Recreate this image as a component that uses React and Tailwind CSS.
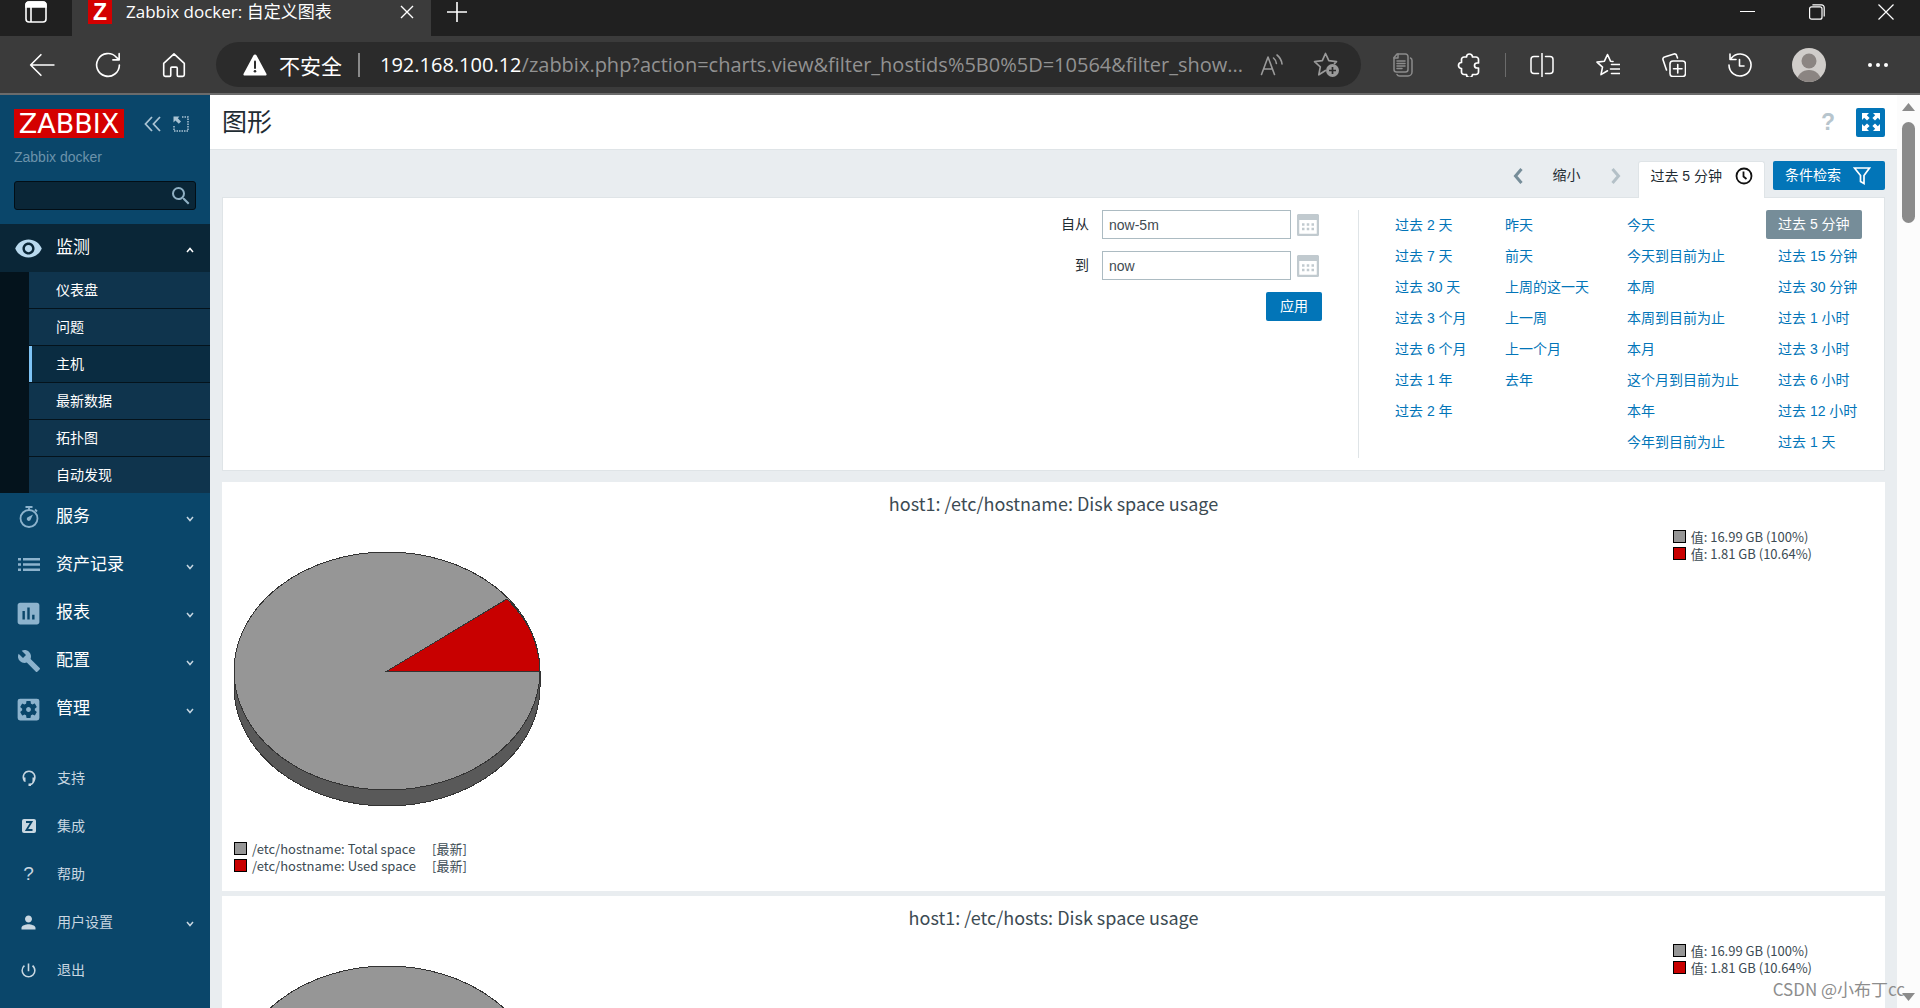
import React from "react";
import {
  MdVisibility,
  MdAssessment,
  MdBuild,
  MdSettingsApplications,
  MdPerson,
  MdPowerSettingsNew,
  MdSearch,
} from "react-icons/md";

/* ---------- shared drawing helpers ---------- */

function Line({ size = 24, children, width = 2, className = "" }) {
  return (
    <svg
      width={size}
      height={size}
      viewBox="0 0 24 24"
      fill="none"
      stroke="currentColor"
      strokeWidth={width}
      strokeLinecap="round"
      strokeLinejoin="round"
      className={className}
      aria-hidden="true"
    >
      {children}
    </svg>
  );
}

/* ---------- browser chrome ---------- */

function TabStrip() {
  return (
    <div className="flex h-9 bg-[#202020] text-white">
      <button type="button" aria-label="标签操作" className="flex w-[72px] items-center justify-center pb-3">
        <svg width="24" height="24" viewBox="0 0 24 24" fill="none" stroke="currentColor" strokeWidth="1.6" aria-hidden="true">
          <rect x="2" y="2" width="20" height="20" rx="3" />
          <path d="M2 7V5a3 3 0 0 1 3-3h14a3 3 0 0 1 3 3v2z" fill="currentColor" />
          <path d="M7 7v15" />
        </svg>
      </button>
      <div className="flex w-[359px] items-center bg-[#3b3b3b] pb-3 pl-4">
        <span className="flex size-6 items-center justify-center bg-[#d40000] font-['Liberation_Sans',sans-serif] text-[23px] font-bold leading-6">
          Z
        </span>
        <span className="ml-[14px] flex-1 whitespace-nowrap font-['Open_Sans','Noto_Sans_CJK_SC',sans-serif] text-[17px] leading-6">
          Zabbix docker: 自定义图表
        </span>
        <button type="button" aria-label="关闭标签页" className="mr-[17px]">
          <svg width="14" height="14" viewBox="0 0 14 14" stroke="currentColor" strokeWidth="1.4" aria-hidden="true">
            <path d="M1 1l12 12M13 1L1 13" />
          </svg>
        </button>
      </div>
      <button type="button" aria-label="新建标签页" className="flex w-[52px] items-center justify-center pb-3">
        <svg width="22" height="22" viewBox="0 0 22 22" stroke="currentColor" strokeWidth="1.6" aria-hidden="true">
          <path d="M11 1v20M1 11h20" />
        </svg>
      </button>
      <div className="ml-auto flex pb-3">
        <button type="button" aria-label="最小化" className="flex w-[69px] items-center justify-center">
          <svg width="16" height="16" viewBox="0 0 16 16" stroke="currentColor" strokeWidth="1" aria-hidden="true">
            <path d="M0 7.5h15" />
          </svg>
        </button>
        <button type="button" aria-label="还原" className="flex w-[69px] items-center justify-center">
          <svg width="16" height="16" viewBox="0 0 16 16" fill="none" stroke="currentColor" strokeWidth="1.2" aria-hidden="true">
            <rect x="0.6" y="2.8" width="12.4" height="12.4" rx="2" />
            <path d="M3.4 0.8h9.200a2.600 2.600 0 0 1 2.600 2.600v9" />
          </svg>
        </button>
        <button type="button" aria-label="关闭" className="flex w-[69px] items-center justify-center">
          <svg width="16" height="16" viewBox="0 0 16 16" stroke="currentColor" strokeWidth="1.2" aria-hidden="true">
            <path d="M0.500 0.500l15 15M15.500 0.500l-15 15" />
          </svg>
        </button>
      </div>
    </div>
  );
}

function ToolButton({ label, className = "w-[66px]", children }) {
  return (
    <button type="button" aria-label={label} className={`flex items-center justify-center ${className}`}>
      {children}
    </button>
  );
}

function AddressBar() {
  return (
    <div className="ml-[9px] mr-[9px] flex h-[45px] min-w-0 flex-1 items-center rounded-full bg-[#2b2b2b] pl-[27px] pr-2">
      <svg width="24" height="24" viewBox="0 0 24 24" className="shrink-0" aria-hidden="true">
        <path d="M12 1.500c.7 0 1.300.4 1.600 1l9.800 18.300c.5 1-.1 1.700-1 1.700H1.600c-.9 0-1.500-.7-1-1.700L10.400 2.500c.3-.6.900-1 1.600-1z" fill="#fff" />
        <path d="M12 8.500v6.500" stroke="#2b2b2b" strokeWidth="2" strokeLinecap="round" />
        <circle cx="12" cy="18.200" r="1.300" fill="#2b2b2b" />
      </svg>
      <span className="ml-3 shrink-0 font-['Noto_Sans_CJK_SC',sans-serif] text-[21px] leading-6 text-white">不安全</span>
      <span className="ml-4 h-6 w-0.5 shrink-0 bg-[#8a8a8a]" />
      <div
        role="textbox"
        aria-label="地址栏"
        className="ml-5 min-w-0 flex-1 overflow-hidden whitespace-nowrap font-['Open_Sans',sans-serif] text-[20px] leading-7 text-[#929292]"
      >
        <span className="text-white">192.168.100.12</span>
        /zabbix.php?action=charts.view&amp;filter_hostids%5B0%5D=10564&amp;filter_show...
      </div>
      <ToolButton label="大声朗读" className="w-[54px] shrink-0 text-[#9a9a9a]">
        <Line width={1.6}>
          <path d="M1.500 21.500L8 4l6.500 17.500M4 16h8" />
          <path d="M13.500 5c1.700 1.400 2.700 3.200 2.900 5.500M17 2c2.900 2.200 4.500 5 5 9" />
        </Line>
      </ToolButton>
      <ToolButton label="收藏" className="w-[54px] shrink-0 text-[#9a9a9a]">
        <svg width="26" height="26" viewBox="0 0 26 26" fill="none" aria-hidden="true">
          <path d="M12.500 18.500l-6.700 4.300 1.500-8L1.500 9.700l7.800-1L12.500 1.500l3.300 7.200 7.700 1-2 1.800" stroke="currentColor" strokeWidth="1.700" strokeLinejoin="round" strokeLinecap="round" />
          <circle cx="19.500" cy="18.500" r="6.500" fill="currentColor" />
          <path d="M19.500 15v7M16 18.500h7" stroke="#2b2b2b" strokeWidth="1.700" />
        </svg>
      </ToolButton>
    </div>
  );
}

function Toolbar() {
  return (
    <div className="flex h-[59px] items-stretch border-b-2 border-[#6b6b6b] bg-[#3b3b3b] px-[9px] text-white">
      <ToolButton label="返回">
        <Line size={26} width={1.5}>
          <path d="M23 12H1.500M11 2.500L1.500 12l9.500 9.500" />
        </Line>
      </ToolButton>
      <ToolButton label="刷新">
        <Line size={26} width={1.5}>
          <path d="M22.500 12a10.500 10.500 0 1 1-2.900-7.300L22 7M22.300 1.500V7.300H16.500" />
        </Line>
      </ToolButton>
      <ToolButton label="主页">
        <Line size={26} width={1.5}>
          <path d="M2.500 10.500L12 1.800l9.500 8.700V21a1.500 1.500 0 0 1-1.500 1.500h-4a1 1 0 0 1-1-1V15a1 1 0 0 0-1-1h-4a1 1 0 0 0-1 1v6.500a1 1 0 0 1-1 1H4A1.500 1.500 0 0 1 2.500 21z" />
        </Line>
      </ToolButton>
      <div className="flex min-w-0 flex-1 items-center">
        <AddressBar />
      </div>
      <ToolButton label="阅读器" className="w-[66px] text-[#8c8c8c]">
        <Line width={1.5}>
          <path d="M6 1h8.500A2.500 2.500 0 0 1 17 3.500v13a2.500 2.500 0 0 1-2.500 2.500h-9A2.500 2.500 0 0 1 3 16.500V4.500z" />
          <path d="M7 1v4H3M6 8h8M6 10.500h8M6 13h8M6 15.500h5" />
          <path d="M19.500 5c1 .4 1.500 1.300 1.500 2.500V19a4 4 0 0 1-4 4H8.500c-1.200 0-2-.5-2.500-1.500" />
        </Line>
      </ToolButton>
      <ToolButton label="扩展">
        <Line width={1.7}>
          <path d="M9.500 4a3 3 0 0 1 6 0H19a2.500 2.500 0 0 1 2.500 2.500V10H20a2.500 2.500 0 0 0 0 5h1.500v4a2.500 2.500 0 0 1-2.500 2.500h-3.500a3 3 0 0 1-6 0H7A2.500 2.500 0 0 1 4.500 19v-3.500a3 3 0 0 1 0-6v-3A2.500 2.500 0 0 1 7 4z" />
        </Line>
      </ToolButton>
      <span className="flex w-[7px] items-center justify-center">
        <span className="h-6 w-px bg-[#6b6b6b]" />
      </span>
      <ToolButton label="分屏">
        <Line width={1.5}>
          <path d="M12 0.500v23M8.500 3.500H4A3 3 0 0 0 1 6.500v11a3 3 0 0 0 3 3h4.500M15.500 3.500H20a3 3 0 0 1 3 3v11a3 3 0 0 1-3 3h-4.500" />
        </Line>
      </ToolButton>
      <ToolButton label="收藏夹">
        <Line width={1.6}>
          <path d="M17 8.500l-2.500-.3L11.500 1.500 8.400 8.200l-7.400.9 5.500 5-1.500 7.500 6.500-3.800" />
          <path d="M15.500 11.500H23.500M14.500 16H23.500M15.500 20.500H23.500" />
        </Line>
      </ToolButton>
      <ToolButton label="集锦">
        <Line width={1.6}>
          <rect x="8" y="8" width="15.500" height="15.500" rx="3" />
          <path d="M15.750 11.500v8.500M11.500 15.750H20M15.500 5l-.8-2.300A2.200 2.200 0 0 0 12 1L2.500 4A2.200 2.200 0 0 0 1 6.800L4.500 17" />
        </Line>
      </ToolButton>
      <ToolButton label="历史记录">
        <Line width={1.6}>
          <path d="M1 12A11 11 0 1 0 3.500 5M2 1v5.500h6M11.500 6.500V13H16" />
        </Line>
      </ToolButton>
      <ToolButton label="个人资料" className="w-[72px]">
        <svg width="34" height="34" viewBox="0 0 34 34" aria-hidden="true">
          <clipPath id="avatar">
            <circle cx="17" cy="17" r="17" />
          </clipPath>
          <g clipPath="url(#avatar)">
            <rect width="34" height="34" fill="#d0cdca" />
            <circle cx="17" cy="13" r="7.500" fill="#8b8582" />
            <ellipse cx="17" cy="33" rx="12" ry="11" fill="#8b8582" />
          </g>
        </svg>
      </ToolButton>
      <ToolButton label="设置及其他">
        <svg width="20" height="4" viewBox="0 0 20 4" fill="currentColor" aria-hidden="true">
          <circle cx="2" cy="2" r="2" />
          <circle cx="10" cy="2" r="2" />
          <circle cx="18" cy="2" r="2" />
        </svg>
      </ToolButton>
    </div>
  );
}

/* ---------- sidebar ---------- */

function Chevron({ up }) {
  return (
    <svg width="8" height="6" viewBox="0 0 8 6" fill="none" stroke="currentColor" strokeWidth="1.500" className="mt-1" aria-hidden="true">
      <path d={up ? "M1 5l3-3.500L7 5" : "M1 1l3 3.500L7 1"} />
    </svg>
  );
}

function StopwatchIcon() {
  return (
    <svg width="22" height="22" viewBox="0 0 22 22" fill="none" aria-hidden="true">
      <circle cx="11" cy="12.500" r="8.500" stroke="currentColor" strokeWidth="1.800" />
      <path d="M7.500 1h7M11 1v3M17 3.500l2 2" stroke="currentColor" strokeWidth="1.800" />
      <path d="M15 8.500l-2.300 5a2 2 0 1 1-2.500-2.500z" fill="currentColor" />
    </svg>
  );
}

function ListIcon() {
  return (
    <svg width="22" height="22" viewBox="0 0 22 22" fill="currentColor" aria-hidden="true">
      <path d="M0 4h3v2.500H0zM5 4h17v2.500H5zM0 9.200h3v2.500H0zM5 9.200h17v2.500H5zM0 14.400h3v2.500H0zM5 14.400h17v2.500H5z" />
    </svg>
  );
}

function HeadsetIcon() {
  return (
    <svg width="16" height="16" viewBox="0 0 16 16" fill="none" aria-hidden="true">
      <path d="M3.500 11C.5 6 3.500 1.200 8 1.200S15.500 6 13 11c-.9 2-2 3.500-4 3.800" stroke="currentColor" strokeWidth="1.500" />
      <path d="M2 7.500h2.500V12H3.500zM11.500 7.500H14L12.500 12h-1zM7.500 13.500H10V16H7.500z" fill="currentColor" />
    </svg>
  );
}

const BIG = "size-[29px]";
const mainItems = [
  { label: "服务", icon: <StopwatchIcon /> },
  { label: "资产记录", icon: <ListIcon /> },
  { label: "报表", icon: <MdAssessment className={BIG} /> },
  { label: "配置", icon: <MdBuild className="size-6" /> },
  { label: "管理", icon: <MdSettingsApplications className={BIG} /> },
];

const subItems = ["仪表盘", "问题", "主机", "最新数据", "拓扑图", "自动发现"];

const footItems = [
  { label: "支持", icon: <HeadsetIcon /> },
  {
    label: "集成",
    icon: (
      <span className="flex size-[14px] items-center justify-center rounded-xs bg-current">
        <svg width="8" height="10" viewBox="0 0 8 10" fill="none" stroke="#0a466a" strokeWidth="1.800" aria-hidden="true">
          <path d="M1 1h5.500L1.500 9H7.500" />
        </svg>
      </span>
    ),
  },
  { label: "帮助", icon: <span className="text-[19px] leading-5">?</span> },
  { label: "用户设置", icon: <MdPerson className="size-[21px]" />, more: true },
  { label: "退出", icon: <MdPowerSettingsNew className="size-[19px]" /> },
];

function Sidebar() {
  return (
    <aside className="flex w-[210px] shrink-0 flex-col bg-[#0a466a]">
      <div className="flex items-center pl-[14px] pt-[14px]">
        <a
          href="#home"
          className="flex h-[29px] w-[110px] items-center justify-center bg-[#d40000] font-['DejaVu_Sans',sans-serif] text-[27px] leading-[29px] text-white"
        >
          ZABBIX
        </a>
        <button type="button" aria-label="收起侧边栏" className="ml-5 text-[#a9c3d3]">
          <svg width="17" height="16" viewBox="0 0 17 16" fill="none" stroke="currentColor" strokeWidth="1.800" aria-hidden="true">
            <path d="M8 1L1.500 8 8 15M16 1L9.500 8l6.500 7" />
          </svg>
        </button>
        <button type="button" aria-label="隐藏侧边栏" className="ml-3 text-[#a9c3d3]">
          <svg width="16" height="16" viewBox="0 0 16 16" aria-hidden="true">
            <path d="M9 1H15V15H1V9" fill="none" stroke="currentColor" strokeWidth="1.500" strokeDasharray="1.500 1" />
            <path d="M0.500 0.500h6L4.800 2.200l3.200 3.400-2.200 2.200-3.400-3.300L0.500 6.500z" fill="currentColor" />
          </svg>
        </button>
      </div>
      <div className="mt-[9px] px-[14px] text-[14px] leading-5 text-[#6c93ab]">Zabbix docker</div>
      <form className="mx-[14px] mt-[14px] flex h-[29px] items-center rounded-[3px] border border-[#020e16] bg-[#0a2637] pr-0.5">
        <input type="text" aria-label="搜索" className="min-w-0 flex-1 bg-transparent px-2 text-[14px] text-white outline-none" />
        <button type="button" aria-label="搜索" className="text-[#8fb0c4]">
          <MdSearch className="size-6" />
        </button>
      </form>
      <nav className="mt-[14px] flex flex-col text-[17px] text-white">
        <a href="#monitoring" className="flex h-12 items-center bg-[#0a2637] pr-4">
          <span className="flex w-[56px] justify-start pl-[14px] text-[#b9d9ee]">
            <MdVisibility className="size-[29px]" />
          </span>
          <span className="flex-1">监测</span>
          <Chevron up />
        </a>
        <ul className="border-l-[29px] border-[#04131c] text-[14px]">
          {subItems.map((label) => {
            const on = label === "主机";
            return (
              <li key={label} className="border-b border-[#04131c] last:border-b-0">
                <a
                  href="#sub"
                  className={
                    on
                      ? "flex h-9 items-center border-l-[3px] border-[#7fc4f5] bg-[#0a2c41] pl-6"
                      : "flex h-9 items-center bg-[#0f344d] pl-[27px]"
                  }
                >
                  {label}
                </a>
              </li>
            );
          })}
        </ul>
        {mainItems.map(({ label, icon }) => (
          <a href="#section" key={label} className="flex h-12 items-center pr-4">
            <span className="flex w-[56px] items-center pl-[14px] text-[#8db3cd]">
              <span className="flex w-[29px] justify-center">{icon}</span>
            </span>
            <span className="flex-1">{label}</span>
            <span className="text-[#c5d5e0]">
              <Chevron />
            </span>
          </a>
        ))}
      </nav>
      <nav className="mt-[21px] flex flex-col text-[14px] text-[#c9d7e1]">
        {footItems.map(({ label, icon, more }) => (
          <a href="#user" key={label} className="flex h-12 items-center pr-4">
            <span className="flex w-[57px] items-center pl-[14px]">
              <span className="flex w-[29px] justify-center">{icon}</span>
            </span>
            <span className="flex-1">{label}</span>
            {more && <Chevron />}
          </a>
        ))}
      </nav>
    </aside>
  );
}

/* ---------- time filter ---------- */

function CalendarIcon() {
  return (
    <svg width="22" height="22" viewBox="0 0 22 22" aria-hidden="true">
      <rect x="1" y="1" width="20" height="20" rx="1.500" fill="none" stroke="#c1cacf" strokeWidth="2.500" />
      <rect x="1" y="1" width="20" height="5" fill="#c1cacf" />
      <path d="M5 10.500h12M5 15h12" stroke="#c1cacf" strokeWidth="2.500" strokeDasharray="2.500 2.250" />
    </svg>
  );
}

function DateField({ id, label, value }) {
  return (
    <div className="flex items-center justify-end">
      <label htmlFor={id} className="mr-[13px] text-[14px]">
        {label}
      </label>
      <input
        id={id}
        type="text"
        defaultValue={value}
        className="h-[29px] w-[189px] border border-[#acbbc2] bg-white px-[6px] text-[14px] text-[#3f4b52] outline-none"
      />
      <button type="button" aria-label="日历" className="ml-[6px] mr-[3px]">
        <CalendarIcon />
      </button>
    </div>
  );
}

const ranges = [
  ["过去 2 天", "过去 7 天", "过去 30 天", "过去 3 个月", "过去 6 个月", "过去 1 年", "过去 2 年"],
  ["昨天", "前天", "上周的这一天", "上一周", "上一个月", "去年"],
  ["今天", "今天到目前为止", "本周", "本周到目前为止", "本月", "这个月到目前为止", "本年", "今年到目前为止"],
  ["过去 5 分钟", "过去 15 分钟", "过去 30 分钟", "过去 1 小时", "过去 3 小时", "过去 6 小时", "过去 12 小时", "过去 1 天"],
];

function TimeFilter() {
  return (
    <section className="pt-[11px]">
      <div className="flex items-start justify-end text-[14px]">
        <button type="button" aria-label="上一时段" className="flex h-[29px] w-9 items-center justify-center">
          <svg width="10" height="16" viewBox="0 0 10 16" fill="none" stroke="#768d99" strokeWidth="3" aria-hidden="true">
            <path d="M8.500 1L2.500 8l6 7" />
          </svg>
        </button>
        <button type="button" className="h-[29px] px-4">缩小</button>
        <button type="button" aria-label="下一时段" className="mr-0.5 flex h-[29px] w-10 items-center justify-center">
          <svg width="10" height="16" viewBox="0 0 10 16" fill="none" stroke="#b4c0c7" strokeWidth="3" aria-hidden="true">
            <path d="M1.500 1l6 7-6 7" />
          </svg>
        </button>
        <a
          href="#range"
          className="z-10 -mb-px flex h-[37px] items-center gap-[13px] rounded-t-[3px] border border-b-0 border-[#dfe4e7] bg-white px-[11px] pb-2"
        >
          过去 5 分钟
          <svg width="18" height="18" viewBox="0 0 18 18" fill="none" stroke="#111" strokeWidth="1.800" aria-hidden="true">
            <circle cx="9" cy="9" r="7.500" />
            <path d="M8.500 4.500v5l3 2.500" />
          </svg>
        </a>
        <a
          href="#filter"
          className="ml-2 flex h-[29px] items-center gap-3 rounded-[2px] bg-[#0275b8] pl-3 pr-[14px] text-white"
        >
          条件检索
          <svg width="18" height="18" viewBox="0 0 17 18" fill="none" stroke="currentColor" strokeWidth="1.700" aria-hidden="true">
            <path d="M1 1h15L10.500 8.500V16.500L7 14.500V8.500z" />
          </svg>
        </a>
      </div>
      <div className="flex justify-end border border-[#dfe4e7] bg-white py-3 pr-3">
        <div className="flex flex-col gap-3 pr-9">
          <DateField id="from" label="自从" value="now-5m" />
          <DateField id="to" label="到" value="now" />
          <button type="button" className="h-[29px] self-end rounded-[2px] bg-[#0275b8] px-[14px] text-[14px] text-white">
            应用
          </button>
        </div>
        <div className="grid grid-cols-[110px_122px_151px_106px] border-l border-[#dfe4e7] pl-6 text-[14px] text-[#0275b8]">
          {ranges.map((col, i) => (
            <ul key={i}>
              {col.map((t) => (
                <li key={t} className="flex h-[31px] items-start whitespace-nowrap">
                  <a
                    href="#t"
                    className={
                      t === "过去 5 分钟"
                        ? "h-[29px] rounded-[2px] bg-[#768d99] px-3 leading-[29px] text-white"
                        : "px-3 leading-[31px]"
                    }
                  >
                    {t}
                  </a>
                </li>
              ))}
            </ul>
          ))}
        </div>
      </div>
    </section>
  );
}

/* ---------- charts ---------- */

function Pie() {
  return (
    <svg width="308" height="256" viewBox="0 0 308 256" shapeRendering="crispEdges" stroke="#333" strokeWidth="1" role="img" aria-label="Disk space usage">
      <path d="M1 120v16a153 119 0 0 0 306 0v-16z" fill="#595959" />
      <ellipse cx="154" cy="120" rx="153" ry="119" fill="#969696" />
      <path d="M154 120L274 48A153 119 0 0 1 307 120z" fill="#c80000" />
    </svg>
  );
}

function Swatch({ red }) {
  return <span className={`size-[13px] border border-black ${red ? "bg-[#c80000]" : "bg-[#969696]"}`} />;
}

function Chart({ path, items = [] }) {
  return (
    <article className="h-[409px] bg-white px-3 font-['Noto_Sans_CJK_SC',sans-serif] text-[13px] leading-[17px] text-[#3c4b53]">
      <h2 className="pt-[9px] text-center text-[18px] leading-6">host1: {path}: Disk space usage</h2>
      <div className="flex items-start justify-between pt-[13px]">
        <div className="-ml-px pt-[23px]">
          <Pie />
        </div>
        <ul className="mr-[61px]">
          <li className="flex items-center gap-[5px]">
            <Swatch /> 值: 16.99 GB (100%)
          </li>
          <li className="flex items-center gap-[5px]">
            <Swatch red /> 值: 1.81 GB (10.64%)
          </li>
        </ul>
      </div>
      <table className="mt-[33px]">
        <tbody>
          {items.map((name, i) => (
            <tr key={name}>
              <td className="w-[18px] p-0">
                <span className="flex">
                  <Swatch red={i === 1} />
                </span>
              </td>
              <td className="w-[180px] p-0">
                {path}: {name}
              </td>
              <td className="p-0">[最新]</td>
            </tr>
          ))}
        </tbody>
      </table>
    </article>
  );
}

/* ---------- page ---------- */

function Scrollbar() {
  return (
    <div className="flex w-[23px] shrink-0 flex-col items-center bg-[#fcfcfc] pt-2 pb-[7px]" aria-hidden="true">
      <svg width="13" height="8" viewBox="0 0 13 8" fill="#8b8b8b">
        <path d="M6.500 0L13 8H0z" />
      </svg>
      <span className="mt-[11px] h-[101px] w-[13px] rounded-full bg-[#8b8b8b]" />
      <svg width="13" height="8" viewBox="0 0 13 8" fill="#8b8b8b" className="mt-auto">
        <path d="M6.500 8L0 0h13z" />
      </svg>
    </div>
  );
}

export default function App() {
  return (
    <div className="relative flex h-screen flex-col overflow-hidden font-['Liberation_Sans','Noto_Sans_CJK_SC',sans-serif] text-[#1f2c33]">
      <header className="shrink-0">
        <TabStrip />
        <Toolbar />
      </header>
      <div className="flex min-h-0 flex-1">
        <Sidebar />
        <main className="min-w-0 flex-1 overflow-hidden bg-[#e9edf0]">
          <div className="flex h-[55px] items-center border-b border-[#dfe4e7] bg-white px-3">
            <h1 className="flex-1 text-[25px] leading-8">图形</h1>
            <a href="#help" className="mr-[21px] text-[23px] font-bold leading-7 text-[#b7c5cd]">
              ?
            </a>
            <button type="button" aria-label="全屏" className="flex size-[29px] items-center justify-center rounded-[2px] bg-[#0275b8] text-white">
              <svg width="18" height="18" viewBox="0 0 18 18" fill="currentColor" aria-hidden="true">
                <path d="M0 0h7L4.800 2.200 7.600 5 5 7.600 2.200 4.800 0 7zM18 0v7l-2.200-2.200L13 7.600 10.400 5l2.800-2.800L11 0zM0 18v-7l2.200 2.200L5 10.400 7.600 13l-2.800 2.800L7 18zM18 18h-7l2.200-2.200-2.800-2.800 2.600-2.600 2.800 2.800L18 11z" />
              </svg>
            </button>
          </div>
          <div className="pl-3 pr-3">
            <TimeFilter />
            <div className="mt-[11px] flex flex-col gap-[5px]">
              <Chart path="/etc/hostname" items={["Total space", "Used space"]} />
              <Chart path="/etc/hosts" />
            </div>
          </div>
        </main>
        <Scrollbar />
      </div>
      <div className="absolute bottom-[7px] right-[15px] font-['Noto_Sans_CJK_SC',sans-serif] text-[17px] leading-6 text-[#8d8d8d]">
        CSDN @小布丁cc
      </div>
    </div>
  );
}
